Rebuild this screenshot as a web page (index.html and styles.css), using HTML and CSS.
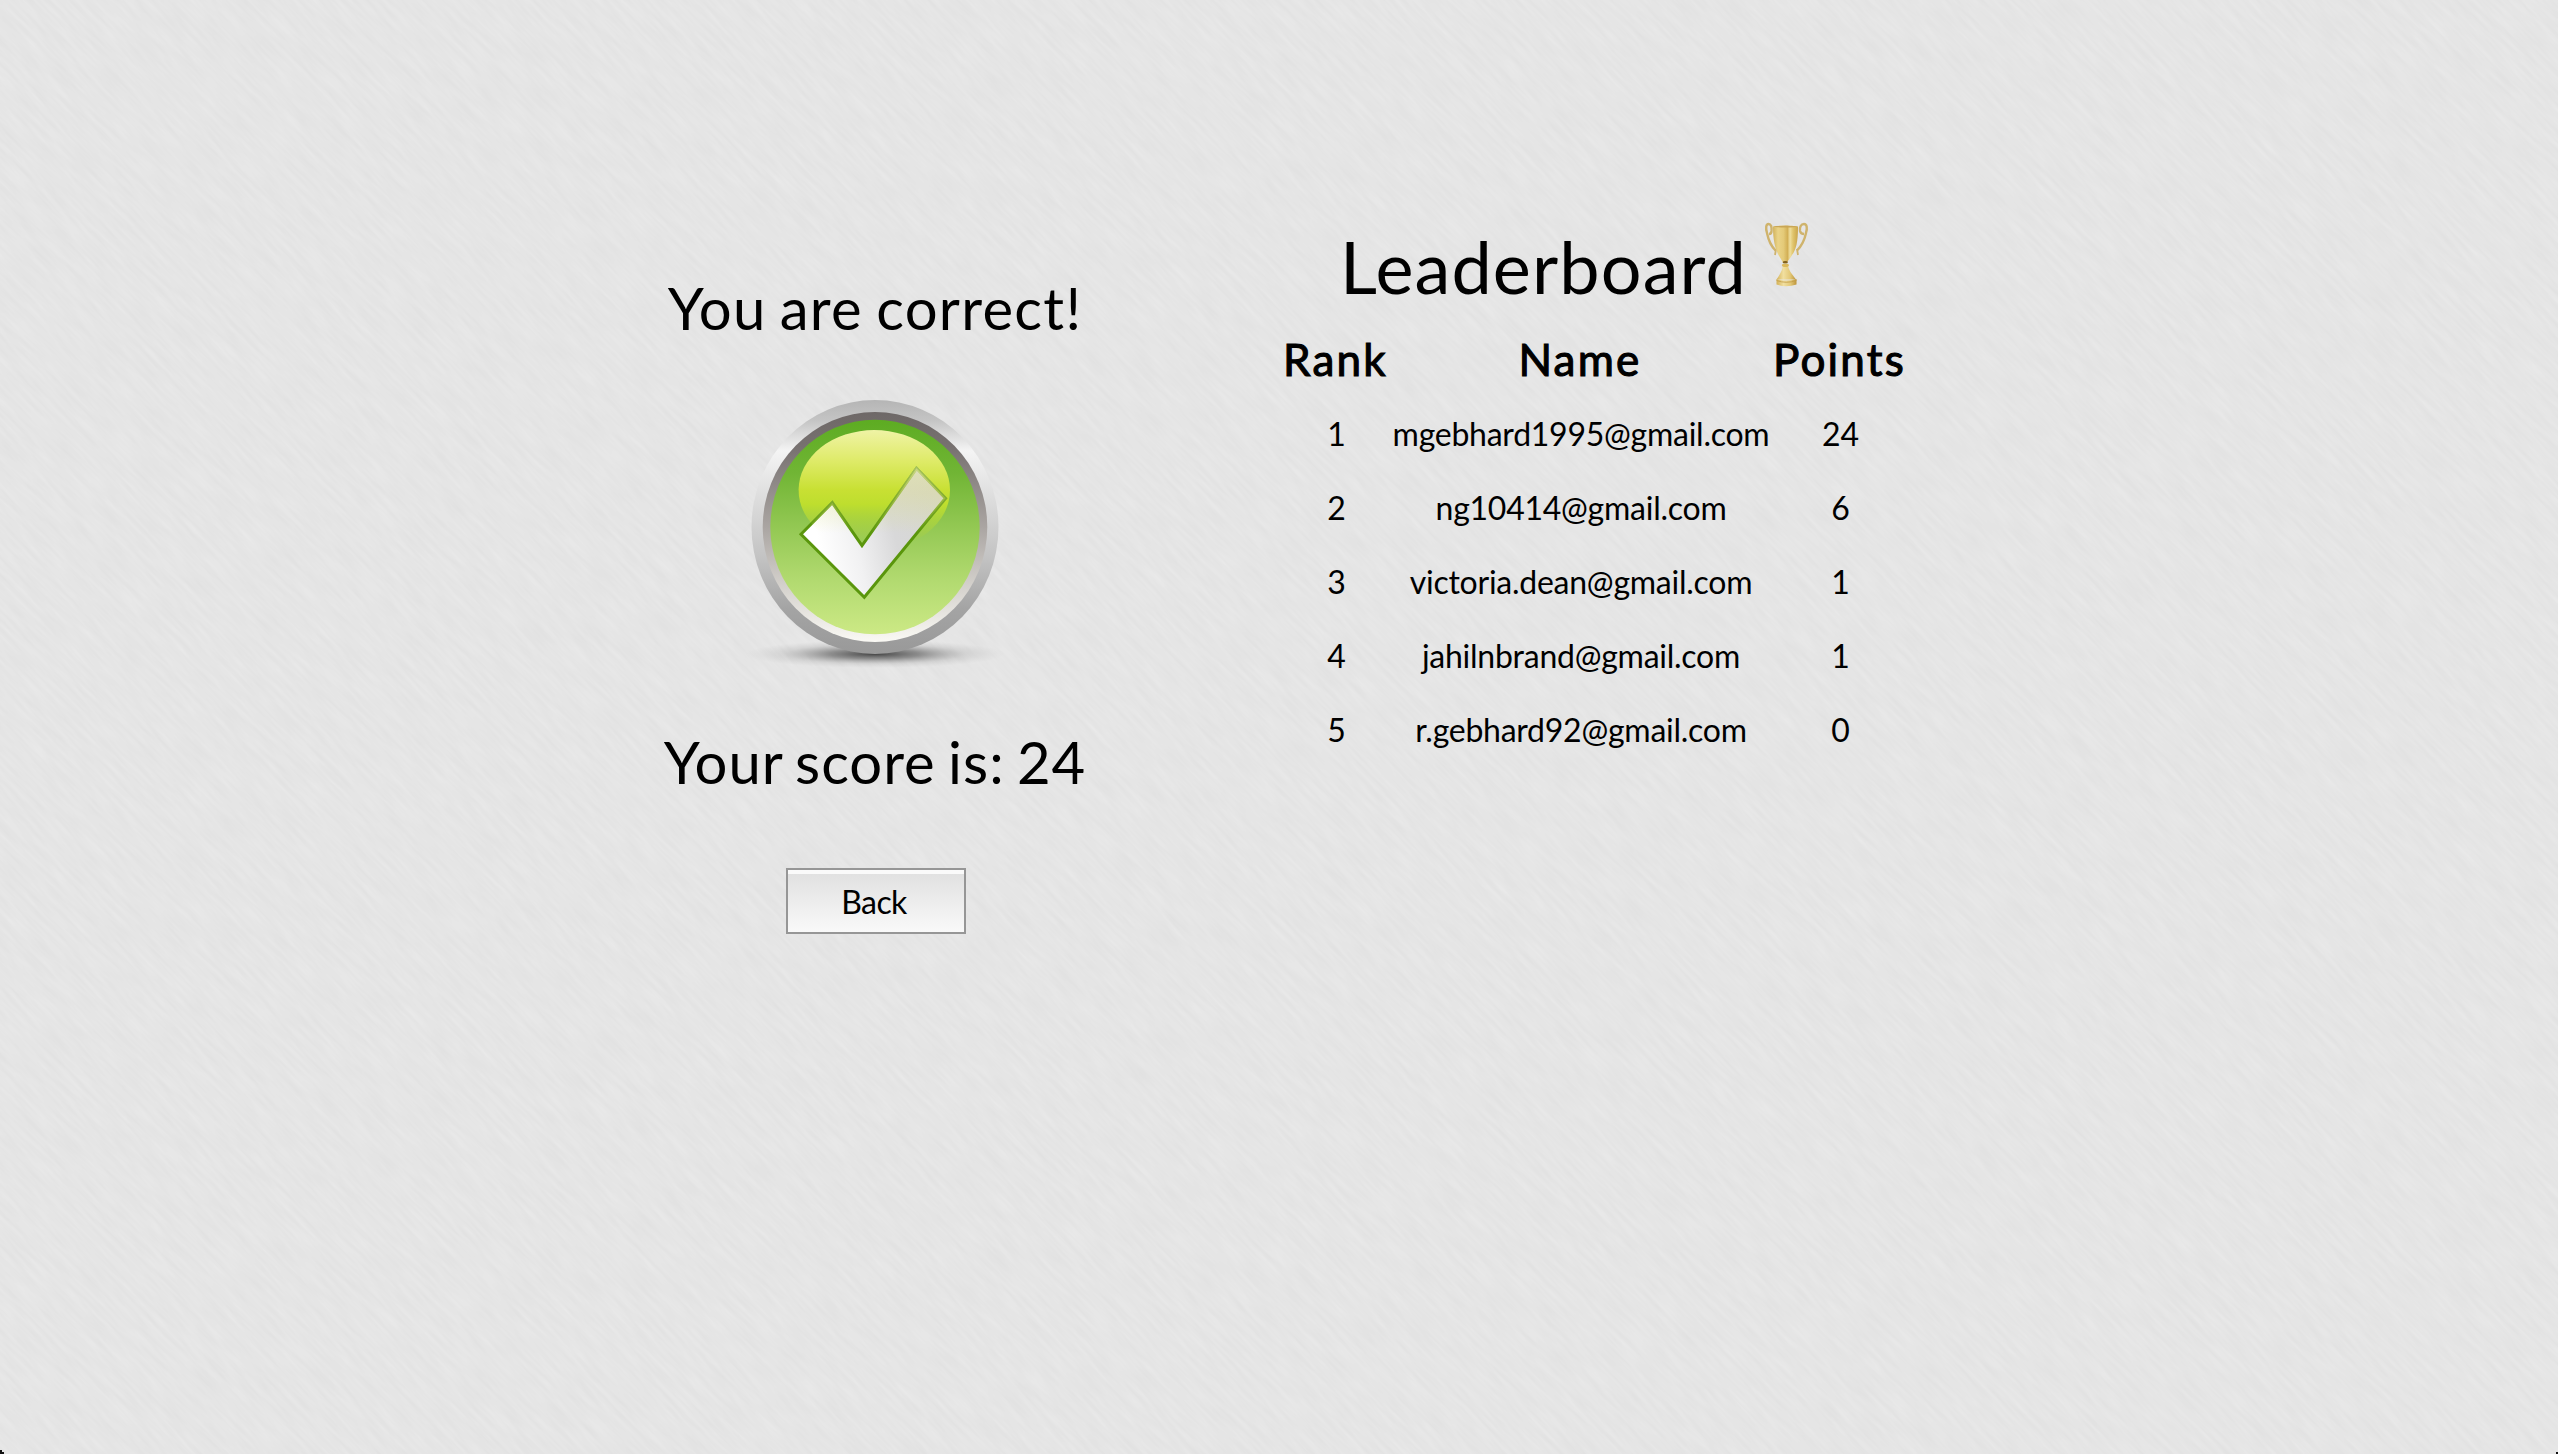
FILE: index.html
```html
<!DOCTYPE html>
<html lang="en">
<head>
<meta charset="utf-8">
<title>Leaderboard</title>
<link rel="stylesheet" href="styles.css">
</head>
<body>
<div class="backdrop" aria-hidden="true">
<svg class="texture">
  <filter id="paper" x="0" y="0" width="100%" height="100%" color-interpolation-filters="sRGB">
    <feTurbulence type="fractalNoise" baseFrequency="0.026 0.24" numOctaves="3" seed="4"/>
    <feColorMatrix values="0.038 0 0 0 0.879  0.038 0 0 0 0.879  0.038 0 0 0 0.879  0 0 0 0 1"/>
  </filter>
  <rect width="100%" height="100%" filter="url(#paper)"/>
</svg>
</div>
<main class="page">
  <section class="result">
    <h2 class="message">You are correct!</h2>
    <svg class="badge" viewBox="0 0 290 300">
      <defs>
        <linearGradient id="rim" x1="0" y1="0" x2="0" y2="1"><stop offset="0" stop-color="#b5b5b5"/><stop offset=".08" stop-color="#c4c4c4"/><stop offset=".2" stop-color="#f4f4f4"/><stop offset=".36" stop-color="#e0e0e0"/><stop offset=".62" stop-color="#c3c3c3"/><stop offset=".82" stop-color="#a4a4a4"/><stop offset="1" stop-color="#999"/></linearGradient>
        <linearGradient id="bevel" x1="0" y1="0" x2="0" y2="1"><stop offset="0" stop-color="#6e6867"/><stop offset=".15" stop-color="#777170"/><stop offset=".5" stop-color="#aaa5a2"/><stop offset=".78" stop-color="#d8d5d0"/><stop offset="1" stop-color="#faf9f4"/></linearGradient>
        <linearGradient id="green" x1="0" y1="0" x2="0" y2="1"><stop offset="0" stop-color="#5dac22"/><stop offset=".25" stop-color="#71b535"/><stop offset=".5" stop-color="#93c853"/><stop offset=".75" stop-color="#b2da70"/><stop offset="1" stop-color="#cce985"/></linearGradient>
        <linearGradient id="gloss" x1="0" y1="0" x2="0" y2="1"><stop offset="0" stop-color="#eff3a5"/><stop offset=".25" stop-color="#dfeb6a"/><stop offset=".5" stop-color="#c8e033"/><stop offset=".62" stop-color="#bede2e"/><stop offset=".85" stop-color="#a9d143" stop-opacity=".55"/><stop offset="1" stop-color="#93c853" stop-opacity="0"/></linearGradient>
        <linearGradient id="metal" gradientUnits="userSpaceOnUse" x1="85" y1="145" x2="205" y2="120"><stop offset="0" stop-color="#fff"/><stop offset=".3" stop-color="#f1f1f2"/><stop offset=".62" stop-color="#d8d8d9"/><stop offset="1" stop-color="#d6d6d2"/></linearGradient>
        <linearGradient id="sheen" gradientUnits="userSpaceOnUse" x1="0" y1="88" x2="0" y2="153"><stop offset="0" stop-color="#e6e8a4" stop-opacity=".55"/><stop offset=".4" stop-color="#dfdf80" stop-opacity=".33"/><stop offset="1" stop-color="#dce66a" stop-opacity="0"/></linearGradient>
        <radialGradient id="ground"><stop offset="0" stop-color="#333" stop-opacity=".9"/><stop offset=".35" stop-color="#555" stop-opacity=".6"/><stop offset=".7" stop-color="#888" stop-opacity=".2"/><stop offset="1" stop-color="#aaa" stop-opacity="0"/></radialGradient>
        <clipPath id="dome"><ellipse cx="144.3" cy="110" rx="75.7" ry="60"/></clipPath>
      </defs>
      <ellipse cx="145" cy="274" rx="130" ry="14" fill="url(#ground)"/>
      <ellipse cx="145" cy="147" rx="123.500" ry="127" fill="url(#rim)"/>
      <ellipse cx="145" cy="147" rx="112.3" ry="115" fill="url(#bevel)"/>
      <ellipse cx="145" cy="147" rx="104.7" ry="107.3" fill="url(#green)"/>
      <ellipse cx="144.3" cy="110" rx="75.7" ry="60" fill="url(#gloss)"/>
      <path d="M102.3 122.7 132 165.7 186.5 88.3 215.5 118.3 134.3 217.3 71 154.3Z" fill="url(#metal)" stroke="#5a960c" stroke-width="3"/>
      <path d="M102.3 122.7 132 165.7 186.5 88.3 215.5 118.3 134.3 217.3 71 154.3Z" fill="url(#sheen)" stroke="url(#sheen)" stroke-width="3" clip-path="url(#dome)"/>
    </svg>
    <h2 class="message score">Your score is: 24</h2>
    <button class="back">Back</button>
  </section>
  <section class="board">
    <h1 class="title"><span>Leaderboard</span>
      <svg class="trophy" viewBox="0 0 70 90">
        <defs>
          <linearGradient id="cup" x1="0" x2="1" y1="0" y2="0"><stop offset="0" stop-color="#d2b35e"/><stop offset=".2" stop-color="#ead387"/><stop offset=".42" stop-color="#e4ca78"/><stop offset=".58" stop-color="#d3b056"/><stop offset=".68" stop-color="#efdf9f"/><stop offset=".8" stop-color="#e0c46c"/><stop offset="1" stop-color="#c9a44a"/></linearGradient>
          <linearGradient id="foot" x1="0" x2="1" y1="0" y2="0"><stop offset="0" stop-color="#d3b157"/><stop offset=".35" stop-color="#f1dfa0"/><stop offset=".7" stop-color="#e3c877"/><stop offset="1" stop-color="#bd943a"/></linearGradient>
        </defs>
        <g fill="none" stroke="#cfb36c" stroke-width="2.400">
          <path d="M21.500 21c.5-4-.5-7-3-7s-3 4-1.500 9c1 5 3 12 8.500 17.500M19 24c2 0 2.500-1 2.500-3"/>
          <path d="M50 21c-.5-4 1-7 4-7s3.500 4 2 9c-1 5-3.500 12-9 17.500M54 24c-2 0-3.500-1-4-3"/>
          <path d="M26 39l-1 6M47 39l1 6" stroke-width="1.800"/>
        </g>
        <path d="M23 16.500Q35 14.500 48 16.500C48 32 46 40 42 45 40 49 38 50 37 53H33C32 50 30 48 28.500 45 25 38 23 30 23 16.500Z" fill="url(#cup)"/>
        <ellipse cx="35.500" cy="16.600" rx="12" ry=".8" fill="#c9a656"/>
        <path d="M33 54h5c0 6 4 10 8 15.500H26.500C30 64 33 60 33 54Z" fill="url(#foot)"/>
        <ellipse cx="35.300" cy="52.300" rx="2.600" ry="1.200" fill="#81601d"/>
        <ellipse cx="35.400" cy="55.300" rx="3.500" ry="1.800" fill="#dcb95b"/>
        <path d="M26.500 69Q36 72 46.500 69V74.500Q36 78 26.500 74.500Z" fill="url(#foot)"/>
        <path d="M26.500 70.500Q36 74 46.500 70.500" fill="none" stroke="#c29c48" stroke-width=".8"/>
      </svg>
    </h1>
    <div class="table">
      <div class="row head"><span>Rank</span><span>Name</span><span>Points</span></div>
      <div class="row"><span>1</span><span class="name">mgebhard1995@gmail.com</span><span>24</span></div>
      <div class="row"><span>2</span><span class="name">ng10414@gmail.com</span><span>6</span></div>
      <div class="row"><span>3</span><span class="name">victoria.dean@gmail.com</span><span>1</span></div>
      <div class="row"><span>4</span><span class="name">jahilnbrand@gmail.com</span><span>1</span></div>
      <div class="row"><span>5</span><span class="name">r.gebhard92@gmail.com</span><span>0</span></div>
    </div>
  </section>
</main>
<i class="corner left"></i>
<i class="corner right"></i>
</body>
</html>
```
FILE: styles.css
```css
* { box-sizing: border-box; }
body {
  position: relative;
  margin: 0;
  height: 1454px;
  overflow: hidden;
  background: #e5e5e5;
  color: #000;
  font-family: Lato, "Liberation Sans", sans-serif;
  font-size: 32px;
}
.backdrop {
  position: absolute;
  inset: 0;
  overflow: hidden;
}
.texture {
  position: absolute;
  left: -321px;
  top: -873px;
  width: 3200px;
  height: 3200px;
  transform: rotate(46deg);
}
.page {
  position: relative;
  display: flex;
  align-items: flex-start;
  padding-left: 640px;
}
.result {
  display: flex;
  flex-direction: column;
  align-items: center;
  width: 470px;
  padding-top: 273px;
}
.message {
  margin: 0;
  font-size: 58px;
  font-weight: 400;
  line-height: 70px;
  letter-spacing: 1.3px;
  word-spacing: -3px;
  white-space: nowrap;
}
.badge { width: 290px; height: 300px; margin-top: 37px; }
.score {
  margin-top: 47px;
  letter-spacing: 1px;
  word-spacing: -3.5px;
}
.back {
  width: 180px;
  height: 66px;
  margin: 71px 0 0 2px;
  padding: 1px 4px 0 0;
  border: 2px solid #969696;
  background: linear-gradient(#fafafa 0 4px, #e1e1e1 4px, #f9f9f9 100%);
  font: inherit;
  letter-spacing: -.6px;
  color: #000;
}
.board {
  width: 624px;
  margin-left: 174px;
  padding-top: 223px;
}
.title {
  display: flex;
  align-items: flex-start;
  height: 99px;
  margin: 0;
  padding-left: 56px;
  font-size: 72px;
  font-weight: 400;
  line-height: 86px;
  letter-spacing: 1.1px;
}
.title span { width: 410px; }
.trophy { width: 70px; height: 90px; margin-top: -13px; }
.row {
  display: grid;
  grid-template-columns: 105px 384px 135px;
  height: 74px;
  line-height: 74px;
  text-align: center;
  white-space: nowrap;
}
.name { letter-spacing: -.25px; }
.head {
  height: 75px;
  margin-left: -1px;
  line-height: 75px;
  font-size: 44px;
  letter-spacing: 2.2px;
  -webkit-text-stroke: 1.1px #000;
}
.corner { position: absolute; bottom: 0; width: 2px; height: 2px; background: #111; }
.corner.left { left: 0; width: 4px; height: 4px; background: linear-gradient(#111, #111) 0 0 / 2px 4px no-repeat, linear-gradient(#111, #111) 0 2px / 4px 2px no-repeat; }
.corner.right { right: 0; }
```
